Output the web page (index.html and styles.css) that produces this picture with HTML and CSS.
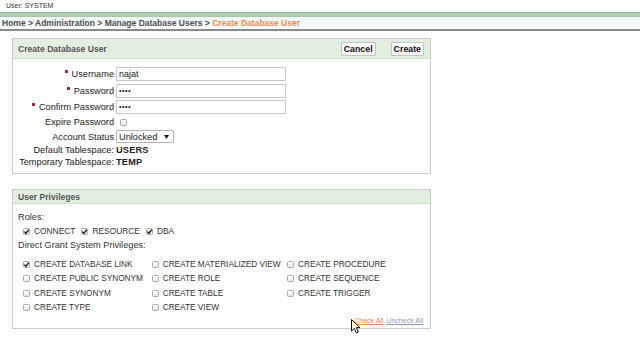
FILE: index.html
```html
<!DOCTYPE html>
<html>
<head>
<meta charset="utf-8">
<title>Create Database User</title>
<link rel="stylesheet" href="styles.css">
</head>
<body>
<div class="top">User: SYSTEM</div>
<div class="band"></div>
<div class="crumbs">Home &gt; Administration &gt; Manage Database Users &gt; <span class="cur">Create Database User</span></div>
<div class="main">
  <section class="panel">
    <div class="phead tall">
      <span class="ptitle">Create Database User</span>
      <div class="btns"><button class="btn">Cancel</button><button class="btn">Create</button></div>
    </div>
    <div class="form">
      <div class="lbl"><span class="req"></span>Username</div><div class="val"><div class="inp">najat</div></div>
      <div class="lbl"><span class="req"></span>Password</div><div class="val"><div class="inp pw">••••</div></div>
      <div class="lbl"><span class="req"></span>Confirm Password</div><div class="val"><div class="inp pw">••••</div></div>
      <div class="lbl">Expire Password</div><div class="val"><span class="cb lone"></span></div>
      <div class="lbl">Account Status</div><div class="val"><div class="sel">Unlocked<svg class="arr" width="5" height="4" viewBox="0 0 5 4"><path d="M0 0H5L2.5 4Z" fill="#111"/></svg></div></div>
      <div class="lbl">Default Tablespace:</div><div class="val"><b>USERS</b></div>
      <div class="lbl">Temporary Tablespace:</div><div class="val"><b>TEMP</b></div>
    </div>
  </section>

  <section class="panel second">
    <div class="phead"><span class="ptitle">User Privileges</span></div>
    <div class="privs">
      <div class="cap">Roles:</div>
      <div class="roles">
        <span class="ck"><span class="cb on"><svg viewBox="0 0 7 7"><path d="M1.3 3.6L2.9 5.2L5.8 1.6" fill="none" stroke="#111" stroke-width="1.3"/></svg></span>CONNECT</span>
        <span class="ck"><span class="cb on"><svg viewBox="0 0 7 7"><path d="M1.3 3.6L2.9 5.2L5.8 1.6" fill="none" stroke="#111" stroke-width="1.3"/></svg></span>RESOURCE</span>
        <span class="ck"><span class="cb on"><svg viewBox="0 0 7 7"><path d="M1.3 3.6L2.9 5.2L5.8 1.6" fill="none" stroke="#111" stroke-width="1.3"/></svg></span>DBA</span>
      </div>
      <div class="cap">Direct Grant System Privileges:</div>
      <div class="grid">
        <span class="ck"><span class="cb on"><svg viewBox="0 0 7 7"><path d="M1.3 3.6L2.9 5.2L5.8 1.6" fill="none" stroke="#111" stroke-width="1.3"/></svg></span>CREATE DATABASE LINK</span>
        <span class="ck"><span class="cb"></span>CREATE MATERIALIZED VIEW</span>
        <span class="ck"><span class="cb"></span>CREATE PROCEDURE</span>
        <span class="ck"><span class="cb"></span>CREATE PUBLIC SYNONYM</span>
        <span class="ck"><span class="cb"></span>CREATE ROLE</span>
        <span class="ck"><span class="cb"></span>CREATE SEQUENCE</span>
        <span class="ck"><span class="cb"></span>CREATE SYNONYM</span>
        <span class="ck"><span class="cb"></span>CREATE TABLE</span>
        <span class="ck"><span class="cb"></span>CREATE TRIGGER</span>
        <span class="ck"><span class="cb"></span>CREATE TYPE</span>
        <span class="ck"><span class="cb"></span>CREATE VIEW</span>
      </div>
      <div class="links"><a class="lnk hot" href="#">Check All</a><a class="lnk" href="#">Uncheck All</a></div>
    </div>
  </section>
</div>
<svg class="cursor" width="11" height="15" viewBox="0 0 11 15"><path d="M0.5 0.5V12L3.3 9.4L5.4 14L7.3 13.1L5.3 8.6H9Z" fill="#fff" stroke="#111" stroke-width="1" stroke-linejoin="round"/></svg>
</body>
</html>
```
FILE: styles.css
```css
body {
  margin: 0;
  font-family: "Liberation Sans", Arial, sans-serif;
  color: #222;
  background: #fff;
}
.top {
  height: 12px;
  line-height: 12px;
  font-size: 7px;
  padding-left: 6px;
  color: #333;
}
.band {
  height: 5px;
  background: linear-gradient(#94b794, #bcd5bc 45%, #a3c4a3);
}
.crumbs {
  height: 12px;
  line-height: 13px;
  padding-left: 2px;
  font-size: 8.5px;
  font-weight: bold;
  color: #4d4d4d;
  background: linear-gradient(#eef6f6, #fafdfd);
  border-bottom: 2px solid #8a8a8a;
  white-space: nowrap;
}
.cur { color: #ef8a50; }
.main {
  padding: 7px 0 0 12px;
  width: 419px;
}
.panel {
  border: 1px solid #cbcbcb;
  background: #fff;
}
.second {
  margin-top: 15px;
  position: relative;
}
.phead {
  height: 13px;
  background: #e1eee0;
  border-bottom: 1px solid #d0ddcf;
  display: flex;
  align-items: center;
  justify-content: space-between;
  padding: 0 5px;
}
.phead.tall { height: 19px; }
.ptitle {
  font-size: 8.6px;
  font-weight: bold;
  color: #555;
}
.btns {
  display: flex;
  gap: 15px;
  padding-right: 1px;
}
.btn {
  font-family: "Liberation Sans", Arial, sans-serif;
  font-size: 8.8px;
  font-weight: bold;
  color: #111;
  height: 14px;
  padding: 0 2px;
  background: linear-gradient(#ffffff, #f1f1f1);
  border: 1px solid #c4c4c4;
  border-radius: 1px;
  line-height: 12px;
}
.form {
  display: grid;
  grid-template-columns: 101px 1fr;
  grid-template-rows: 16px 17px 15px 16px 13px 14px 10px;
  column-gap: 2px;
  padding: 7px 0 6px 0;
  font-size: 9.2px;
  color: #222;
}
.lbl {
  display: flex;
  align-items: center;
  justify-content: flex-end;
  white-space: nowrap;
}
.req {
  width: 3px;
  height: 3px;
  background: #a32b35;
  margin-right: 4px;
  margin-top: -5px;
}
.val {
  display: flex;
  align-items: center;
}
.val b { font-size: 9.2px; letter-spacing: 0.2px; }
.inp {
  box-sizing: border-box;
  width: 170px;
  height: 14px;
  border: 1px solid #c8c8c8;
  padding-left: 2px;
  font-size: 9px;
  line-height: 12px;
  color: #222;
}
.inp.pw { font-size: 7.5px; letter-spacing: 0.4px; }
.sel {
  box-sizing: border-box;
  width: 58px;
  height: 13px;
  border: 1px solid #b5b5b5;
  border-radius: 1px;
  display: flex;
  align-items: center;
  justify-content: space-between;
  padding: 0 4px 0 2px;
  font-size: 9.2px;
}
.cb {
  box-sizing: border-box;
  display: inline-block;
  position: relative;
  width: 7px;
  height: 7px;
  border: 1px solid #a9a9a9;
  border-radius: 1.5px;
  background: linear-gradient(#ffffff, #e6e6e6);
  flex: none;
}
.cb svg {
  position: absolute;
  left: -1px;
  top: -1px;
  width: 7px;
  height: 7px;
}
.cb.lone { margin-left: 4px; }
.privs {
  padding: 6px 7px 3px 0;
}
.cap {
  height: 14px;
  line-height: 14px;
  padding-left: 5px;
  font-size: 9.2px;
  color: #333;
}
.roles {
  height: 14px;
  display: flex;
  align-items: center;
  gap: 6px;
  padding-left: 10px;
}
.ck {
  display: flex;
  align-items: center;
  gap: 4px;
  font-size: 8.4px;
  color: #333;
  white-space: nowrap;
}
.grid {
  margin-top: 5px;
  display: grid;
  grid-template-columns: 128.7px 135.3px auto;
  grid-auto-rows: 14.5px;
  padding-left: 10px;
}
.grid .ck { gap: 4px; font-size: 8.25px; }
.links {
  height: 10px;
  display: flex;
  align-items: center;
  justify-content: flex-end;
  gap: 3px;
}
.lnk {
  font-size: 7px;
  color: #8d9db0;
  text-decoration: underline;
}
.lnk.hot { color: #ea8650; }
.cursor {
  position: absolute;
  left: 351px;
  top: 319px;
}
```
